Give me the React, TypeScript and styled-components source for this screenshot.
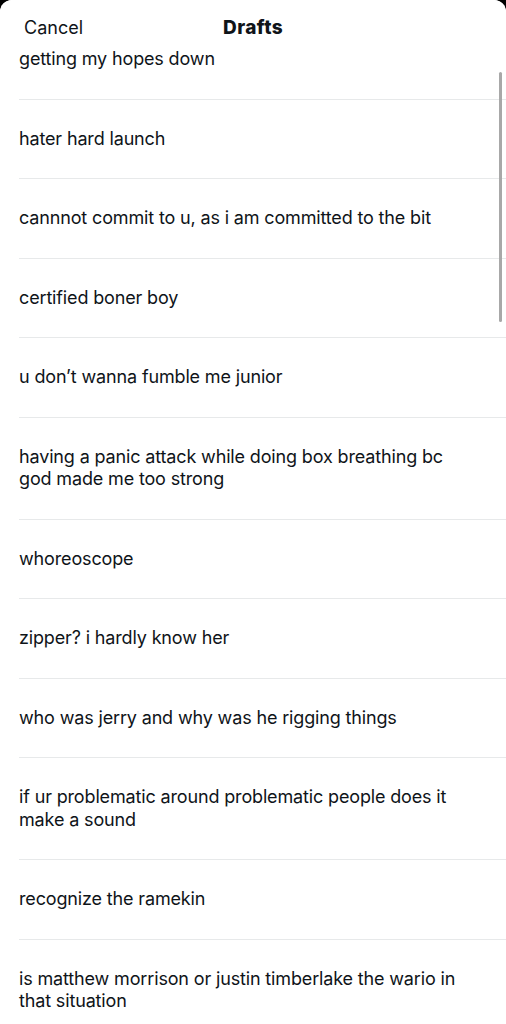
import React from "react";
import styled, { createGlobalStyle } from "styled-components";

const GlobalStyle = createGlobalStyle`
  html, body {
    margin: 0;
    padding: 0;
    background: #000;
  }
  body {
    font-family: Inter, "Noto Sans", "Liberation Sans", sans-serif;
    -webkit-font-smoothing: antialiased;
  }
`;

const drafts = [
  "getting my hopes down",
  "hater hard launch",
  "cannnot commit to u, as i am committed to the bit",
  "certified boner boy",
  "u don\u2019t wanna fumble me junior",
  "having a panic attack while doing box breathing bc god made me too strong",
  "whoreoscope",
  "zipper? i hardly know her",
  "who was jerry and why was he rigging things",
  "if ur problematic around problematic people does it make a sound",
  "recognize the ramekin",
  "is matthew morrison or justin timberlake the wario in that situation",
];

const Sheet = styled.div`
  position: relative;
  width: 506px;
  height: 1024px;
  background: #fff;
  border-radius: 12px 12px 0 0;
  overflow: hidden;
  display: flex;
  flex-direction: column;
  color: #0f1419;
`;

const Header = styled.header`
  display: grid;
  grid-template-columns: 1fr auto 1fr;
  align-items: center;
  height: 45px;
  padding: 0 24px;
  flex-shrink: 0;
  position: relative;
  z-index: 1;
  background: #fff;
`;

const CancelButton = styled.button`
  justify-self: start;
  border: 0;
  background: none;
  padding: 0;
  margin-top: 9px;
  font: inherit;
  font-size: 18px;
  color: #0f1419;
`;

const Title = styled.h1`
  margin: 9px 0 0;
  font-size: 19px;
  font-weight: 800;
  letter-spacing: 0.4px;
`;

const Viewport = styled.div`
  flex: 1;
  overflow: hidden;
`;

const List = styled.ul<{ $offset: number }>`
  list-style: none;
  margin: ${(p) => -p.$offset}px 0 0;
  padding: 0 0 0 19px;
`;

const Row = styled.li`
  padding: 28px 40px 28px 0;
  font-size: 18px;
  line-height: 22.5px;
  letter-spacing: -0.15px;
  border-bottom: 1px solid #e7e9ea;
`;

const Scrollbar = styled.div`
  position: absolute;
  top: 72px;
  right: 4px;
  width: 3px;
  height: 250px;
  border-radius: 2px;
  background: #a8a8a8;
`;

export default function App() {
  return (
    <>
      <GlobalStyle />
      <Sheet>
        <Header>
          <CancelButton>Cancel</CancelButton>
          <Title>Drafts</Title>
        </Header>
        <Viewport>
          <List $offset={25}>
            {drafts.map((d) => (
              <Row key={d}>{d}</Row>
            ))}
          </List>
        </Viewport>
        <Scrollbar />
      </Sheet>
    </>
  );
}
